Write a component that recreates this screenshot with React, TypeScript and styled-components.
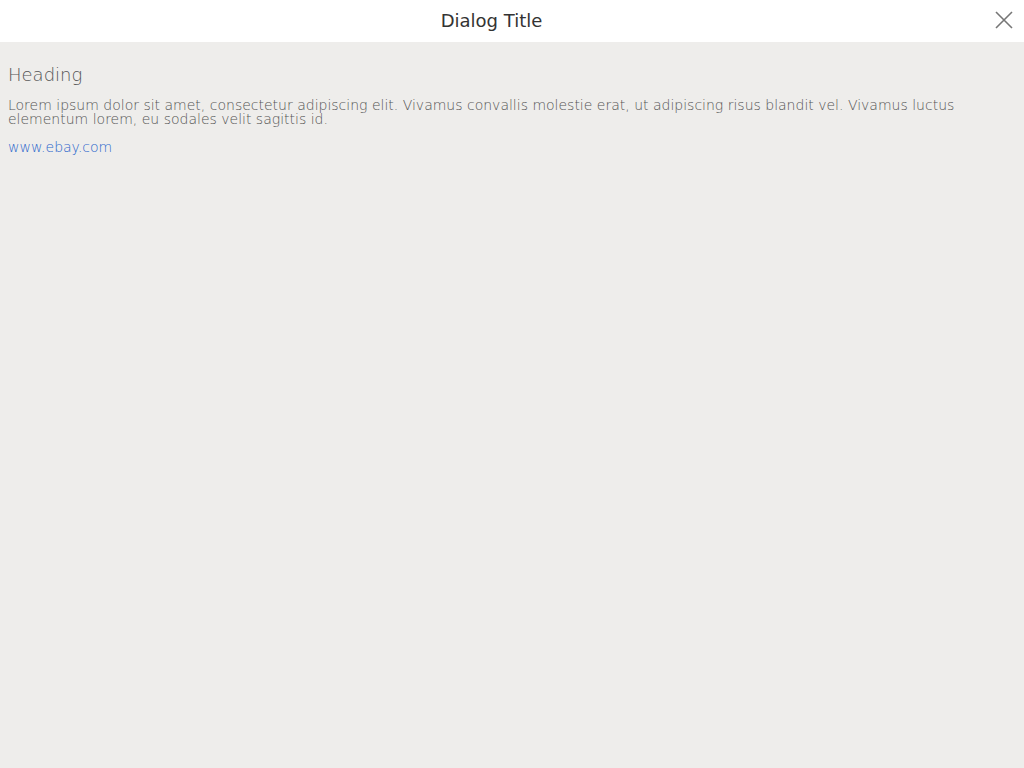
import styled, { createGlobalStyle } from "styled-components";

const GlobalStyle = createGlobalStyle`
  html, body {
    margin: 0;
    padding: 0;
    height: 100%;
    background: #eeedeb;
    font-family: "DejaVu Sans", sans-serif;
  }
  #root {
    min-height: 100%;
  }
`;

const Page = styled.div`
  display: flex;
  flex-direction: column;
  min-height: 100vh;
  background: #eeedeb;
`;

const Header = styled.header`
  display: flex;
  align-items: center;
  height: 42px;
  background: #ffffff;
`;

const Title = styled.h2`
  flex: 1;
  margin: 0 0 2px;
  text-align: center;
  font-size: 18px;
  font-weight: normal;
  color: #333333;
`;

const CloseButton = styled.button`
  width: 41px;
  height: 41px;
  display: flex;
  align-items: center;
  justify-content: center;
  padding: 0 0 2px;
  border: 0;
  background: transparent;
  cursor: pointer;
`;

const Body = styled.main`
  padding: 21px 8px;
  color: #555555;
  font-weight: 200;
`;

const Heading = styled.h3`
  margin: 0 0 11px;
  font-size: 18px;
  font-weight: 200;
  line-height: 24px;
`;

const Text = styled.p`
  margin: 0 0 11px;
  font-size: 14px;
  line-height: 14px;
`;

const Link = styled.a`
  font-size: 14px;
  line-height: 18px;
  color: #2a66cc;
  text-decoration: none;
`;

export default function App() {
  return (
    <>
      <GlobalStyle />
      <Page>
        <Header>
          <Title>Dialog Title</Title>
          <CloseButton aria-label="Close">
            <svg width="18" height="18" viewBox="0 0 18 18">
              <path d="M1 1L17 17M17 1L1 17" stroke="#767676" strokeWidth="1.6" />
            </svg>
          </CloseButton>
        </Header>
        <Body>
          <Heading>Heading</Heading>
          <Text>
            Lorem ipsum dolor sit amet, consectetur adipiscing elit. Vivamus convallis molestie erat, ut adipiscing
            risus blandit vel. Vivamus luctus elementum lorem, eu sodales velit sagittis id.
          </Text>
          <Link href="#">www.ebay.com</Link>
        </Body>
      </Page>
    </>
  );
}
